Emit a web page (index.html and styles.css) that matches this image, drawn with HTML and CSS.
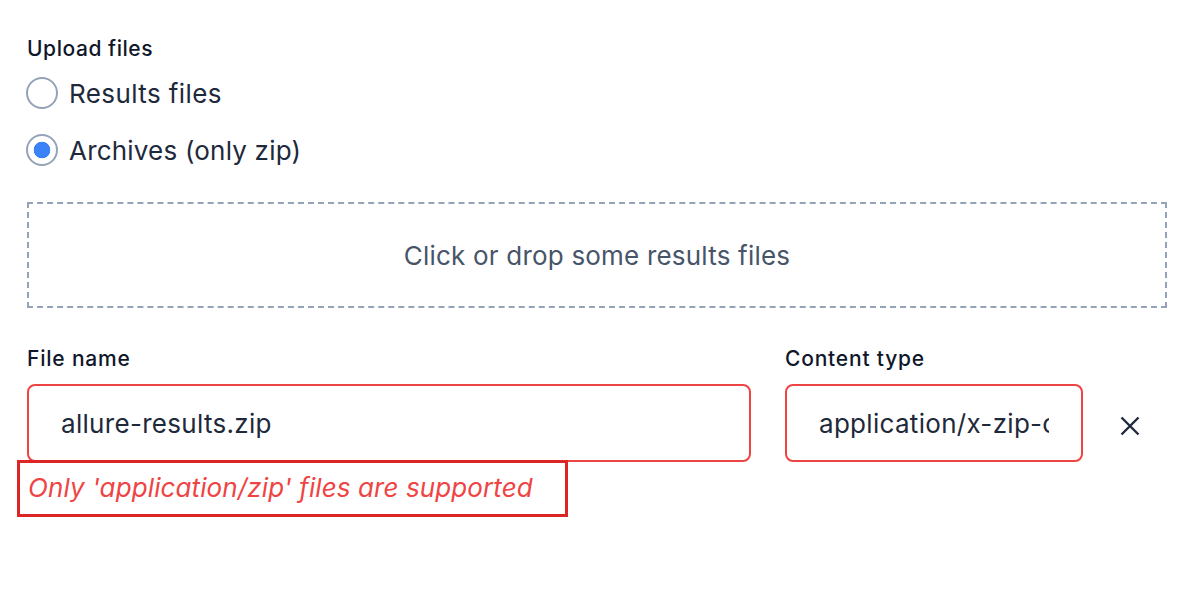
FILE: index.html
```html
<!DOCTYPE html>
<html lang="en">
<head>
<meta charset="utf-8">
<title>Upload files</title>
<link rel="stylesheet" href="styles.css">
</head>
<body>
<form class="upload">
  <div class="field-label upload-label">Upload files</div>
  <div class="radios">
    <label class="radio-row"><input type="radio" name="kind" class="radio"><span class="radio-text">Results files</span></label>
    <label class="radio-row"><input type="radio" name="kind" class="radio" checked><span class="radio-text archives">Archives (only zip)</span></label>
  </div>
  <div class="dropzone">Click or drop some results files</div>
  <div class="file-row">
    <div class="col">
      <div class="field-label">File name</div>
      <input class="text-input invalid" type="text" value="allure-results.zip">
      <div class="error-wrap"><span class="error">Only 'application/zip' files are supported</span></div>
    </div>
    <div class="col">
      <div class="field-label">Content type</div>
      <input class="text-input invalid" type="text" value="application/x-zip-compressed">
    </div>
    <button type="button" class="remove" aria-label="Remove">
      <svg width="20" height="20" viewBox="0 0 20 20"><path d="M1.5 1.5 L18.5 18.5 M18.5 1.5 L1.5 18.5" stroke="#1e293b" stroke-width="2.4" stroke-linecap="butt" fill="none"/></svg>
    </button>
  </div>
</form>
</body>
</html>
```
FILE: styles.css
```css
* { box-sizing: border-box; }
html, body { margin: 0; background: #fff; }
body { font-family: Inter, "Noto Sans", sans-serif; color: #0f172a; }

.upload { padding: 35px 27px 0 27px; display: flex; flex-direction: column; }

.field-label { font-size: 21px; line-height: 28px; font-weight: 500; color: #0f172a; letter-spacing: 0.8px; }
.upload-label { letter-spacing: 0.55px; }

.radios { display: flex; flex-direction: column; gap: 11px; margin-top: 7px; }
.radio-row { display: flex; align-items: center; gap: 11px; height: 46px; font-size: 26px; color: #1e293b; letter-spacing: 0.4px; }
.radio-text.archives { letter-spacing: 0.2px; }
.radio { appearance: none; -webkit-appearance: none; margin: 0 0 0 -1px; width: 32px; height: 32px; border: 2px solid #94a3b8; border-radius: 50%; background: #fff; }
.radio:checked { background: radial-gradient(circle, #3b82f6 0 8px, #fff 8.6px); }

.dropzone { margin-top: 29px; height: 106px; border: 2px dashed #94a3b8; display: flex; align-items: center; justify-content: center; font-size: 26px; color: #475569; font-weight: 400; letter-spacing: 0.2px; }

.file-row { margin-top: 37px; display: grid; grid-template-columns: 724px 298px 26px; column-gap: 34px; align-items: start; }
.col { display: flex; flex-direction: column; gap: 11px; }

.text-input { width: 100%; height: 78px; border: 2px solid #ef4444; border-radius: 8px; padding: 0 32px; font-family: inherit; font-size: 26px; letter-spacing: 0.3px; color: #1e293b; background: #fff; outline: none; }

.error-wrap { margin-top: -13px; margin-left: -10px; }
.error { display: inline-block; width: 551px; height: 57px; border: 3px solid #dc2626; padding: 10px 0 0 8px; font-size: 26px; font-style: italic; color: #ef4444; line-height: 30px; letter-spacing: 0.1px; white-space: nowrap; }

.remove { margin-top: 68px; width: 26px; height: 26px; padding: 0; border: 0; background: none; display: flex; align-items: center; justify-content: center; cursor: pointer; }
```
